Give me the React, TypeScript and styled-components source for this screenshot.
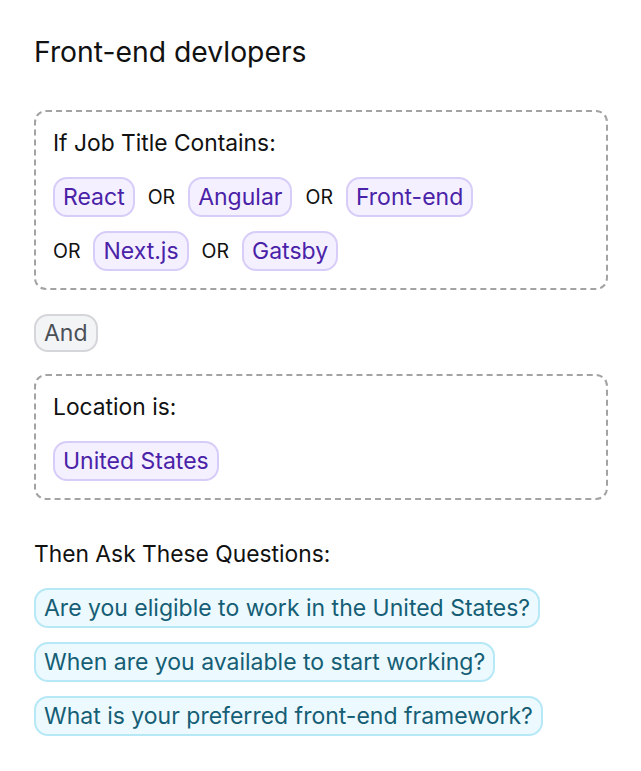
import React from "react";
import styled, { createGlobalStyle } from "styled-components";

const Global = createGlobalStyle`
  html, body { margin: 0; padding: 0; background: #ffffff; }
  body { font-family: Inter, "Noto Sans", sans-serif; color: #111111; }
`;

const Page = styled.div`
  display: flex;
  flex-direction: column;
  align-items: flex-start;
  padding: 36px 33px 0 34px;
`;

const Heading = styled.h1`
  margin: 0 0 42px;
  font-size: 28.3px;
  line-height: 32px;
  font-weight: 400;
  color: #111;
`;

const RuleBox = styled.div`
  align-self: stretch;
  border: 2px dashed #a3a3a3;
  border-radius: 12px;
  padding: 17px 17px;
  display: flex;
  flex-direction: column;
  gap: 20px;
`;

const Label = styled.div`
  font-size: 22.8px;
  line-height: 28px;
  color: #111;
`;

const ChipRow = styled.div`
  display: flex;
  flex-wrap: wrap;
  align-items: center;
  column-gap: 13px;
  row-gap: 14px;
`;

const Group = styled.span`
  display: inline-flex;
  align-items: center;
  gap: 13px;
`;

const Chip = styled.span<{ $tone: "purple" | "gray" | "cyan" }>`
  display: inline-flex;
  align-items: center;
  box-sizing: border-box;
  height: ${(p) => (p.$tone === "gray" ? "38px" : "40px")};
  padding: 0 8px;
  border-radius: 14px;
  font-size: 23px;
  line-height: 1;
  border: 2px solid
    ${(p) => (p.$tone === "purple" ? "#d8cdf8" : p.$tone === "gray" ? "#d4d6da" : "#b6e8f6")};
  background: ${(p) => (p.$tone === "purple" ? "#f4f0ff" : p.$tone === "gray" ? "#f3f4f6" : "#ecf9fe")};
  color: ${(p) => (p.$tone === "purple" ? "#4a22a8" : p.$tone === "gray" ? "#4b5058" : "#155e75")};
`;

const Or = styled.span`
  font-size: 19.5px;
  color: #111;
`;

const AndRow = styled.div`
  display: flex;
  margin: 24px 0 22px;
`;

const QuestionsLabel = styled(Label)`
  margin: 40px 0 20px;
`;

const QuestionList = styled.div`
  display: flex;
  flex-direction: column;
  align-items: flex-start;
  gap: 14px;
`;

const jobTitles = ["React", "Angular", "Front-end", "Next.js", "Gatsby"];
const questions = [
  "Are you eligible to work in the United States?",
  "When are you available to start working?",
  "What is your preferred front-end framework?",
];

export default function App() {
  return (
    <>
      <Global />
      <Page>
        <Heading>Front-end devlopers</Heading>
        <RuleBox>
          <Label>If Job Title Contains:</Label>
          <ChipRow>
            {jobTitles.map((t, i) =>
              i === 0 ? (
                <Chip key={t} $tone="purple">{t}</Chip>
              ) : (
                <Group key={t}>
                  <Or>OR</Or>
                  <Chip $tone="purple">{t}</Chip>
                </Group>
              )
            )}
          </ChipRow>
        </RuleBox>
        <AndRow>
          <Chip $tone="gray">And</Chip>
        </AndRow>
        <RuleBox>
          <Label>Location is:</Label>
          <ChipRow>
            <Chip $tone="purple">United States</Chip>
          </ChipRow>
        </RuleBox>
        <QuestionsLabel>Then Ask These Questions:</QuestionsLabel>
        <QuestionList>
          {questions.map((q) => (
            <Chip key={q} $tone="cyan">{q}</Chip>
          ))}
        </QuestionList>
      </Page>
    </>
  );
}
